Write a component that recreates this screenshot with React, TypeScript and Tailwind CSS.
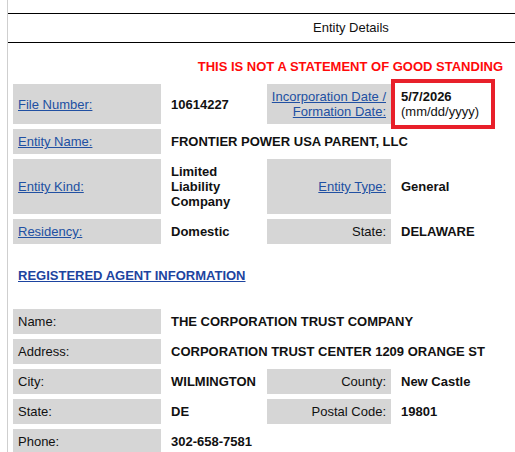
import React from "react";

const label = "bg-[#d6d6d6] px-[5px] py-[5px] leading-[15px] flex items-center";
const labelRight = "bg-[#d6d6d6] px-[5px] py-[5px] leading-[15px] flex items-center justify-end text-right";
const value = "px-[5px] py-[5px] leading-[15px] flex items-center font-bold text-[#111]";
const link = "text-[#2150a2] underline underline-offset-[1px]";

const App = () => {
  return (
    <div
      className="min-h-[452px] w-[515px] overflow-hidden bg-white text-[13px] text-[#111]"
      style={{ fontFamily: '"Liberation Sans", Arial, sans-serif' }}
    >
      <div className="ml-[7px] min-h-[452px] border-l border-[#cfcfcf] pt-[13px]">
        {/* header */}
        <div className="border-y border-black">
          <div className="flex h-[28px] items-center pl-[305px]">Entity Details</div>
        </div>

        <div className="mt-[16px] h-[15px] pr-[12px] text-right font-bold leading-[15px] text-[#ff0a0a]">
          THIS IS NOT A STATEMENT OF GOOD STANDING
        </div>

        {/* entity details */}
        <div className="ml-[5px] mt-[10px] grid grid-cols-[148px_96px_124px_94px] gap-[5px]">
          <div className={label}>
            <a className={link}>File Number:</a>
          </div>
          <div className={value}>10614227</div>
          <div className={`${labelRight} whitespace-nowrap pl-0`}>
            <a className={link}>
              Incorporation Date /
              <br />
              Formation Date:
            </a>
          </div>
          <div className="flex flex-col justify-center px-[5px] py-[5px] leading-[15px] outline-4 outline-offset-[1px] outline-[#e8202a]">
            <span className="font-bold">5/7/2026</span>
            <span>(mm/dd/yyyy)</span>
          </div>

          <div className={label}>
            <a className={link}>Entity Name:</a>
          </div>
          <div className={`${value} col-span-3`}>FRONTIER POWER USA PARENT, LLC</div>

          <div className={label}>
            <a className={link}>Entity Kind:</a>
          </div>
          <div className={value}>Limited Liability Company</div>
          <div className={labelRight}>
            <a className={link}>Entity Type:</a>
          </div>
          <div className={value}>General</div>

          <div className={label}>
            <a className={link}>Residency:</a>
          </div>
          <div className={value}>Domestic</div>
          <div className={labelRight}>State:</div>
          <div className={value}>DELAWARE</div>
        </div>

        <div className="ml-[10px] mt-[24px] h-[15px] leading-[15px]">
          <a className="font-bold text-[#1d44a0] underline underline-offset-[1px]">
            REGISTERED AGENT INFORMATION
          </a>
        </div>

        {/* agent */}
        <div className="ml-[5px] mt-[26px] grid grid-cols-[148px_96px_124px_94px] gap-[5px]">
          <div className={label}>Name:</div>
          <div className={`${value} col-span-3`}>THE CORPORATION TRUST COMPANY</div>

          <div className={label}>Address:</div>
          <div className={`${value} col-span-3`}>CORPORATION TRUST CENTER 1209 ORANGE ST</div>

          <div className={label}>City:</div>
          <div className={value}>WILMINGTON</div>
          <div className={labelRight}>County:</div>
          <div className={value}>New Castle</div>

          <div className={label}>State:</div>
          <div className={value}>DE</div>
          <div className={labelRight}>Postal Code:</div>
          <div className={value}>19801</div>

          <div className={label}>Phone:</div>
          <div className={`${value} col-span-3`}>302-658-7581</div>
        </div>
      </div>
    </div>
  );
};

export default App;
